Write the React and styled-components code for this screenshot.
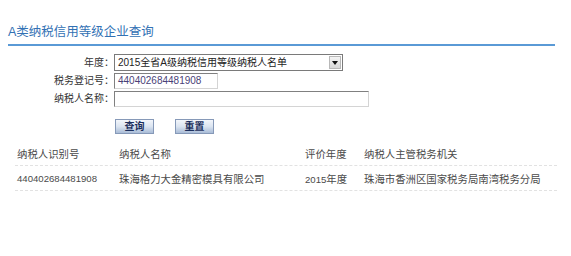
import React from "react";
import styled, { createGlobalStyle } from "styled-components";

const Global = createGlobalStyle`
  html, body { margin: 0; padding: 0; background: #fff; }
  body { font-family: "Liberation Sans", "Noto Sans CJK SC", sans-serif; }
`;

const Page = styled.div`
  width: 571px;
  height: 256px;
  padding: 24px 16px 0 8px;
  box-sizing: border-box;
`;

const Title = styled.h1`
  margin: 0;
  font-weight: normal;
  font-size: 12.5px;
  line-height: 16px;
  height: 20px;
  color: #3271b4;
  font-family: "Liberation Sans", "Noto Sans CJK SC", sans-serif;
  border-bottom: 2px solid #5a9ad6;
`;

const Form = styled.div`
  margin-top: 8px;
  display: grid;
  grid-template-columns: 106px auto;
  row-gap: 2px;
  align-items: center;
  justify-items: start;
`;

const Label = styled.label`
  justify-self: end;
  font-size: 10px;
  color: #333;
  font-family: "Liberation Sans", "Noto Sans CJK SC", sans-serif;
  line-height: 16px;
  white-space: nowrap;
`;

const SelectBox = styled.div`
  width: 229px;
  height: 17px;
  box-sizing: border-box;
  border: 1px solid #7a7a7a;
  display: flex;
  align-items: stretch;
  background: #fff;
`;

const SelectText = styled.span`
  flex: 1;
  font-size: 10px;
  line-height: 15px;
  padding-left: 3px;
  color: #222;
  font-family: "Liberation Sans", "Noto Sans CJK SC", sans-serif;
  white-space: nowrap;
`;

const ArrowBtn = styled.span`
  width: 12px;
  margin: 1px;
  background: linear-gradient(#f4f4f4, #d8d8d8);
  border: 1px solid #b8b8b8;
  box-sizing: border-box;
  display: flex;
  align-items: center;
  justify-content: center;
`;

const TextInput = styled.div`
  width: ${(p) => p.$w}px;
  height: 16px;
  box-sizing: border-box;
  border: 1px solid;
  border-color: #808080 #d4d4d4 #d4d4d4 #808080;
  font-size: 10px;
  line-height: 14px;
  padding-left: 3px;
  color: #4a3f78;
  font-family: "Liberation Sans", sans-serif;
`;

const Buttons = styled.div`
  margin-top: 12px;
  padding-left: 107px;
  display: flex;
  gap: 21px;
`;

const Button = styled.button`
  width: 39px;
  height: 15px;
  padding: 0;
  box-sizing: border-box;
  border: 1px solid #8699b8;
  background: linear-gradient(#f3f6fb 0%, #dbe4f0 50%, #a9bcd7 100%);
  color: #1c2f5c;
  font-size: 10px;
  font-weight: bold;
  line-height: 13px;
  font-family: "Liberation Sans", "Noto Sans CJK SC", sans-serif;
`;

const Table = styled.div`
  margin-top: 7px;
  margin-left: 7px;
  width: 542px;
`;

const Row = styled.div`
  display: grid;
  grid-template-columns: 102px 186px 59px 1fr;
  height: 25px;
  align-items: center;
  border-bottom: 1px dashed #e2e2e2;
  box-sizing: border-box;
`;

const Cell = styled.div`
  padding-left: 2px;
  font-size: 10.4px;
  color: #4a4a4a;
  font-family: "Liberation Sans", "Noto Sans CJK SC", sans-serif;
  white-space: nowrap;
`;

const Num = styled.span`
  font-size: 9.6px;
`;

export default function App() {
  return (
    <Page>
      <Global />
      <Title>A类纳税信用等级企业查询</Title>
      <Form>
        <Label>年度：</Label>
        <SelectBox>
          <SelectText>2015全省A级纳税信用等级纳税人名单</SelectText>
          <ArrowBtn>
            <svg width="6" height="4" viewBox="0 0 6 4">
              <path d="M0 0 H6 L3 4 Z" fill="#111" />
            </svg>
          </ArrowBtn>
        </SelectBox>
        <Label>税务登记号：</Label>
        <TextInput $w={104}>440402684481908</TextInput>
        <Label>纳税人名称：</Label>
        <TextInput $w={255} />
      </Form>
      <Buttons>
        <Button>查询</Button>
        <Button>重置</Button>
      </Buttons>
      <Table>
        <Row>
          <Cell>纳税人识别号</Cell>
          <Cell>纳税人名称</Cell>
          <Cell>评价年度</Cell>
          <Cell>纳税人主管税务机关</Cell>
        </Row>
        <Row>
          <Cell><Num>440402684481908</Num></Cell>
          <Cell>珠海格力大金精密模具有限公司</Cell>
          <Cell><Num>2015</Num>年度</Cell>
          <Cell>珠海市香洲区国家税务局南湾税务分局</Cell>
        </Row>
      </Table>
    </Page>
  );
}
